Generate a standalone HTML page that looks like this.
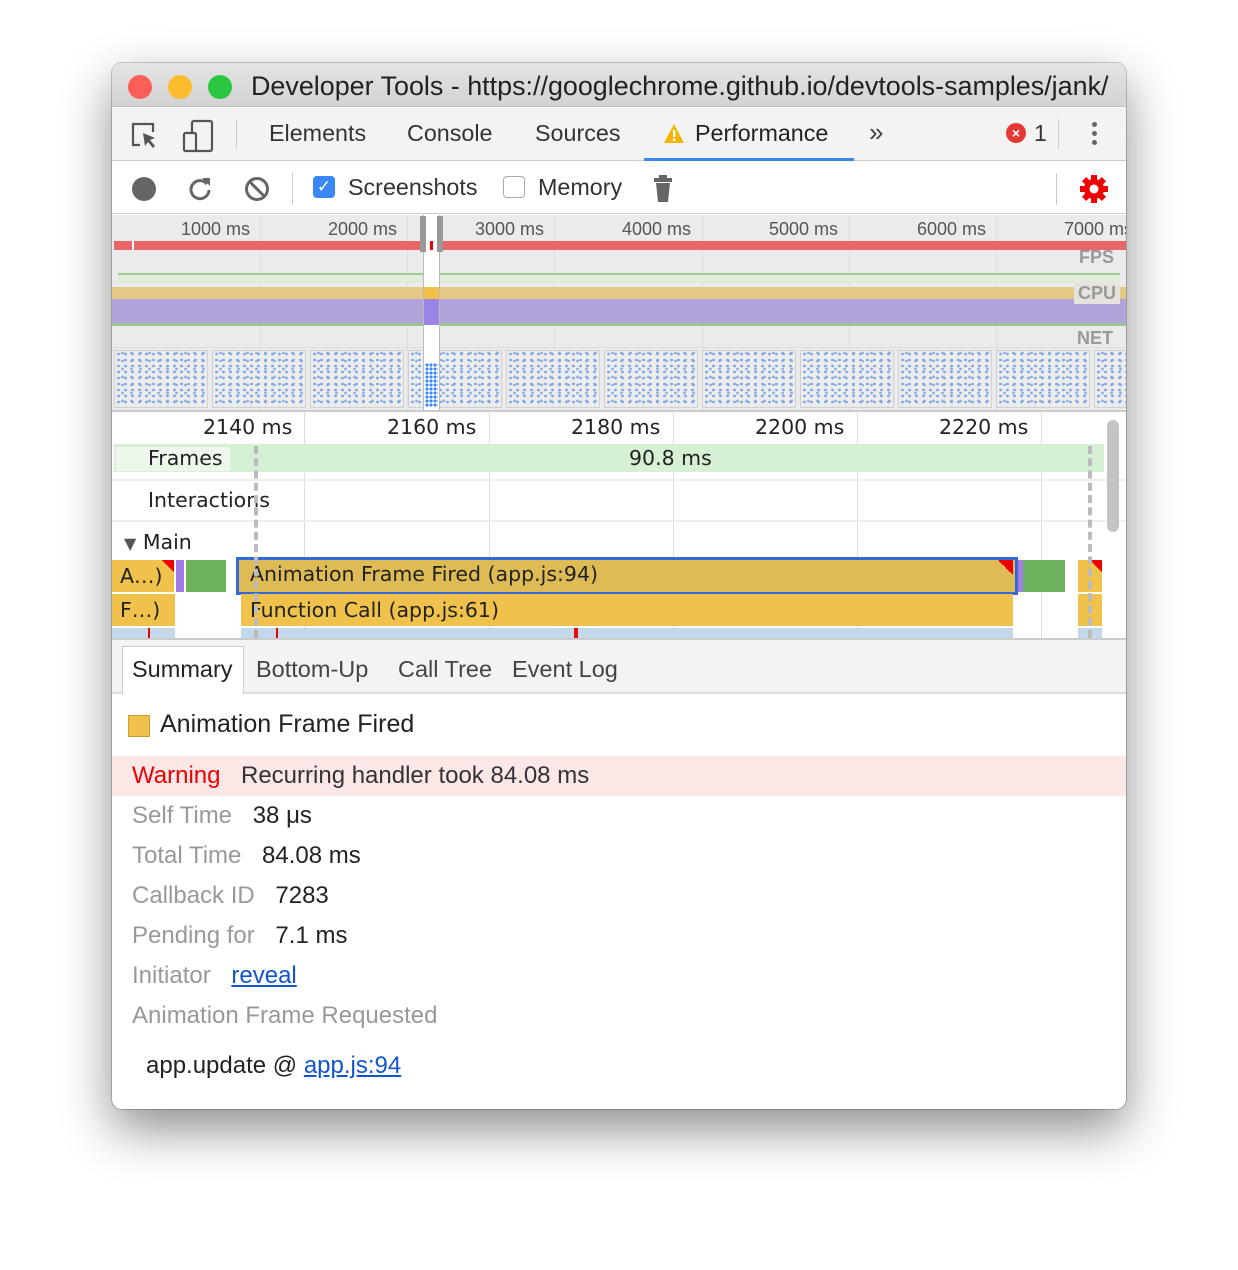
<!DOCTYPE html>
<html><head><meta charset="utf-8"><style>
*{margin:0;padding:0;box-sizing:border-box}
body{width:1238px;height:1270px;background:#fff;position:relative;overflow:hidden;font-family:"Liberation Sans",sans-serif}
.a{position:absolute}
#win{position:absolute;left:112px;top:63px;width:1014px;height:1046px;border-radius:10px;overflow:hidden;background:#fff;box-shadow:0 20px 50px rgba(0,0,0,.45),0 0 0 1px rgba(0,0,0,.2)}
.t{position:absolute;white-space:nowrap}
.dj{font-family:"DejaVu Sans",sans-serif}
.vl{position:absolute;width:1px;background:#ddd}
.shot{position:absolute;top:287px;height:58px;width:94px;background-color:#ececec;border:1px solid #d0d0d0;
background-image:radial-gradient(#7fa6e6 1.3px,transparent 1.7px),radial-gradient(#8fb0e8 1.3px,transparent 1.7px);
background-size:7px 6px,9px 8px;background-position:0 18px,3px 22px}
.s{font-size:24px}
</style></head><body>
<div id="win">
 <div class="a" style="left:0;top:0;width:1014px;height:44px;background:linear-gradient(#e4e4e4,#d3d3d3);border-bottom:1px solid #c0c0c0"></div>
 <div class="a" style="left:16px;top:12px;width:24px;height:24px;border-radius:50%;background:#fc5f57"></div>
 <div class="a" style="left:56px;top:12px;width:24px;height:24px;border-radius:50%;background:#fdbc2e"></div>
 <div class="a" style="left:96px;top:12px;width:24px;height:24px;border-radius:50%;background:#29c840"></div>
 <div class="t" style="left:139px;top:8px;font-size:26.9px;color:#222">Developer Tools - https://googlechrome.github.io/devtools-samples/jank/</div>
 <div class="a" style="left:0;top:45px;width:1014px;height:53px;background:#f3f3f3;border-bottom:1px solid #ccc"></div>
 <svg class="a" style="left:18px;top:58px" width="30" height="30" viewBox="0 0 30 30"><path d="M10 24H3V3h20v8" fill="none" stroke="#555" stroke-width="2.2"/><path d="M13 12l12 5-5 2 5 6-2 2-5-6-3 4z" fill="#555"/></svg>
 <svg class="a" style="left:70px;top:56px" width="34" height="34" viewBox="0 0 34 34"><rect x="10" y="2" width="20" height="30" rx="2" fill="none" stroke="#555" stroke-width="2.2"/><rect x="2" y="14" width="12" height="18" rx="1.5" fill="#f3f3f3" stroke="#555" stroke-width="2.2"/></svg>
 <div class="a" style="left:124px;top:56px;width:1px;height:30px;background:#ccc"></div>
 <div class="t" style="left:157px;top:57px;font-size:23.3px;color:#333">Elements</div>
 <div class="t" style="left:295px;top:57px;font-size:23.3px;color:#333">Console</div>
 <div class="t" style="left:423px;top:57px;font-size:23.3px;color:#333">Sources</div>
 <svg class="a" style="left:551px;top:60px" width="22" height="22" viewBox="0 0 22 22"><path d="M11 1L21 20H1z" fill="#f4b400"/><rect x="10" y="7" width="2.4" height="7" fill="#fff"/><rect x="10" y="15.5" width="2.4" height="2.4" fill="#fff"/></svg>
 <div class="t" style="left:583px;top:57px;font-size:23.3px;color:#222">Performance</div>
 <div class="a" style="left:532px;top:95px;width:210px;height:3px;background:#3d84f1"></div>
 <div class="t" style="left:757px;top:54px;font-size:26px;color:#444">»</div>
 <div class="a" style="left:894px;top:60px;width:20px;height:20px;border-radius:50%;background:#e53935;color:#fff;font-size:14px;text-align:center;line-height:20px;font-weight:bold">×</div>
 <div class="t" style="left:922px;top:57px;font-size:23px;color:#333">1</div>
 <div class="a" style="left:946px;top:56px;width:1px;height:30px;background:#ccc"></div>
 <div class="a" style="left:980px;top:59px;width:5px;height:5px;border-radius:50%;background:#666;box-shadow:0 9px 0 #666,0 18px 0 #666"></div>
 <div class="a" style="left:0;top:99px;width:1014px;height:52px;background:#fff;border-bottom:1px solid #ccc"></div>
 <div class="a" style="left:20px;top:114px;width:24px;height:24px;border-radius:50%;background:#666"></div>
 <svg class="a" style="left:74px;top:112px" width="28" height="28" viewBox="0 0 28 28"><path d="M21 9A9 9 0 1 0 23 15" fill="none" stroke="#666" stroke-width="3"/><path d="M16 3h8v8z" fill="#666"/></svg>
 <svg class="a" style="left:131px;top:112px" width="28" height="28" viewBox="0 0 28 28"><circle cx="14" cy="14" r="10.5" fill="none" stroke="#666" stroke-width="3"/><path d="M7 7l14 14" stroke="#666" stroke-width="3"/></svg>
 <div class="a" style="left:180px;top:110px;width:1px;height:32px;background:#ccc"></div>
 <div class="a" style="left:201px;top:113px;width:22px;height:22px;border-radius:4px;background:#3b87f5;color:#fff;font-size:17px;text-align:center;line-height:22px">✓</div>
 <div class="t" style="left:236px;top:111px;font-size:23.3px;color:#333">Screenshots</div>
 <div class="a" style="left:391px;top:113px;width:22px;height:22px;border-radius:4px;border:1px solid #aaa;background:#fff"></div>
 <div class="t" style="left:426px;top:111px;font-size:23.3px;color:#333">Memory</div>
 <svg class="a" style="left:540px;top:112px" width="22" height="28" viewBox="0 0 22 28"><rect x="7" y="0" width="8" height="3" fill="#666"/><rect x="2" y="3" width="18" height="4" fill="#666"/><path d="M4 8h14l-2 19H6z" fill="#666"/></svg>
 <div class="a" style="left:944px;top:110px;width:1px;height:32px;background:#ccc"></div>
 <svg class="a" style="left:966px;top:110px" width="32" height="32" viewBox="0 0 32 32"><g fill="#e00"><circle cx="16" cy="16" r="10"/><rect x="13" y="2" width="6" height="28"/><rect x="2" y="13" width="28" height="6"/><rect x="13" y="2" width="6" height="28" transform="rotate(45 16 16)"/><rect x="13" y="2" width="6" height="28" transform="rotate(-45 16 16)"/></g><circle cx="16" cy="16" r="4.5" fill="#fff"/></svg>
 <!-- overview -->
 <div class="a" style="left:0;top:152px;width:1014px;height:195px;background:#ebebeb"></div>
 <div class="vl" style="left:148px;top:152px;height:195px"></div>
 <div class="vl" style="left:295px;top:152px;height:195px"></div>
 <div class="vl" style="left:442px;top:152px;height:195px"></div>
 <div class="vl" style="left:590px;top:152px;height:195px"></div>
 <div class="vl" style="left:737px;top:152px;height:195px"></div>
 <div class="vl" style="left:884px;top:152px;height:195px"></div>
 <div class="t" style="left:69px;top:156px;font-size:18px;color:#555">1000 ms</div>
 <div class="t" style="left:216px;top:156px;font-size:18px;color:#555">2000 ms</div>
 <div class="t" style="left:363px;top:156px;font-size:18px;color:#555">3000 ms</div>
 <div class="t" style="left:510px;top:156px;font-size:18px;color:#555">4000 ms</div>
 <div class="t" style="left:657px;top:156px;font-size:18px;color:#555">5000 ms</div>
 <div class="t" style="left:805px;top:156px;font-size:18px;color:#555">6000 ms</div>
 <div class="t" style="left:952px;top:156px;font-size:18px;color:#555">7000 ms</div>
 <div class="a" style="left:2px;top:178px;width:1012px;height:9px;background:#e96666"></div>
 <div class="a" style="left:20px;top:178px;width:2px;height:9px;background:#fff"></div>
 <div class="t" style="left:967px;top:184px;font-size:18px;font-weight:bold;color:#999">FPS</div>
 <div class="a" style="left:6px;top:210px;width:1002px;height:10px;border-top:2px solid #9ccc8f;background:#e0ecd9"></div>
 <div class="a" style="left:0;top:224px;width:1014px;height:38px;background:#e4c883"></div>
 <div class="a" style="left:0;top:236px;width:1014px;height:26px;background:#b3a3db"></div>
 <div class="a" style="left:0;top:260px;width:1014px;height:3px;background:#9bc490"></div>
 <div class="t" style="left:962px;top:220px;font-size:18px;font-weight:bold;color:#999;background:#e6e2dc;padding:0 4px">CPU</div>
 <div class="t" style="left:965px;top:265px;font-size:18px;font-weight:bold;color:#999">NET</div>
 <div class="a" style="left:0;top:284px;width:1014px;height:1px;background:#ddd"></div>
 <div class="shot" style="left:2px"></div><div class="shot" style="left:100px"></div><div class="shot" style="left:198px"></div><div class="shot" style="left:296px"></div><div class="shot" style="left:394px"></div><div class="shot" style="left:492px"></div><div class="shot" style="left:590px"></div><div class="shot" style="left:688px"></div><div class="shot" style="left:786px"></div><div class="shot" style="left:884px"></div><div class="shot" style="left:982px"></div>
 <div class="a" style="left:311px;top:152px;width:17px;height:195px;background:#fff;border-left:1px solid #bbb;border-right:1px solid #bbb"></div>
 <div class="a" style="left:312px;top:224px;width:15px;height:38px;background:#9a84e8"></div>
 <div class="a" style="left:312px;top:224px;width:15px;height:12px;background:#f2c046"></div>
 <div class="a" style="left:313px;top:300px;width:13px;height:44px;background-image:radial-gradient(#3b87f5 1.4px,transparent 1.8px);background-size:4px 4px"></div>
 <div class="a" style="left:308px;top:153px;width:6px;height:36px;background:#999"></div>
 <div class="a" style="left:325px;top:153px;width:6px;height:36px;background:#999"></div>
 <div class="a" style="left:318px;top:178px;width:3px;height:9px;background:#e00"></div>
 <!-- flame chart -->
 <div class="a" style="left:0;top:347px;width:1014px;height:228px;background:#fff;border-top:2px solid #ccc"></div>
 <div class="vl" style="left:192px;top:349px;height:226px"></div>
 <div class="vl" style="left:377px;top:349px;height:226px"></div>
 <div class="vl" style="left:561px;top:349px;height:226px"></div>
 <div class="vl" style="left:745px;top:349px;height:226px"></div>
 <div class="vl" style="left:929px;top:349px;height:226px"></div>
 <div class="t dj" style="left:91px;top:352px;font-size:20.5px;color:#222">2140 ms</div>
 <div class="t dj" style="left:275px;top:352px;font-size:20.5px;color:#222">2160 ms</div>
 <div class="t dj" style="left:459px;top:352px;font-size:20.5px;color:#222">2180 ms</div>
 <div class="t dj" style="left:643px;top:352px;font-size:20.5px;color:#222">2200 ms</div>
 <div class="t dj" style="left:827px;top:352px;font-size:20.5px;color:#222">2220 ms</div>
 <div class="a" style="left:2px;top:381px;width:990px;height:28px;background:#d6f0d3"></div>
 <div class="a" style="left:4px;top:384px;width:114px;height:24px;background:#eef7ec"></div>
 <div class="t dj" style="left:36px;top:383px;font-size:20.5px;color:#222">Frames</div>
 <div class="t dj" style="left:517px;top:383px;font-size:20.5px;color:#222">90.8 ms</div>
 <div class="a" style="left:0;top:416px;width:1014px;height:2px;background:#eee"></div>
 <div class="t dj" style="left:36px;top:425px;font-size:20.5px;color:#222">Interactions</div>
 <div class="a" style="left:0;top:457px;width:1014px;height:2px;background:#eee"></div>
 <div class="t dj" style="left:12px;top:467px;font-size:20.5px;color:#222"><span style="font-size:16px;color:#555">▼</span> Main</div>
 <div class="a dj" style="left:0;top:497px;width:62px;height:32px;background:#f0c24b;font-size:20.5px;line-height:32px;padding-left:8px;color:#222">A…)</div>
 <div class="a" style="left:50px;top:497px;width:12px;height:12px;background:linear-gradient(45deg,transparent 50%,#e00 50%)"></div>
 <div class="a" style="left:64px;top:497px;width:8px;height:32px;background:#a17ce8"></div>
 <div class="a" style="left:74px;top:497px;width:40px;height:32px;background:#6db35f"></div>
 <div class="a" style="left:124px;top:494px;width:782px;height:38px;border:3px solid #3369d6;background:#dfbb55"></div>
 <div class="t dj" style="left:138px;top:499px;font-size:20.5px;color:#222">Animation Frame Fired (app.js:94)</div>
 <div class="a" style="left:886px;top:497px;width:15px;height:15px;background:linear-gradient(45deg,transparent 50%,#e00 50%)"></div>
 <div class="a" style="left:906px;top:497px;width:5px;height:32px;background:#a17ce8"></div>
 <div class="a" style="left:911px;top:497px;width:42px;height:32px;background:#6db35f"></div>
 <div class="a" style="left:966px;top:497px;width:24px;height:32px;background:#f0c24b"></div>
 <div class="a" style="left:978px;top:497px;width:12px;height:12px;background:linear-gradient(45deg,transparent 50%,#e00 50%)"></div>
 <div class="a dj" style="left:0;top:531px;width:63px;height:32px;background:#f0c24b;font-size:20.5px;line-height:32px;padding-left:8px;color:#222">F…)</div>
 <div class="a dj" style="left:129px;top:531px;width:772px;height:32px;background:#f0c24b;font-size:20.5px;line-height:32px;padding-left:9px;color:#222">Function Call (app.js:61)</div>
 <div class="a" style="left:966px;top:531px;width:24px;height:32px;background:#f0c24b"></div>
 <div class="a" style="left:0;top:565px;width:63px;height:10px;background:#c4d8ec"></div>
 <div class="a" style="left:129px;top:565px;width:772px;height:10px;background:#c4d8ec"></div>
 <div class="a" style="left:966px;top:565px;width:24px;height:10px;background:#c4d8ec"></div>
 <div class="a" style="left:36px;top:565px;width:2px;height:10px;background:#e00"></div>
 <div class="a" style="left:164px;top:565px;width:2px;height:10px;background:#e00"></div>
 <div class="a" style="left:462px;top:565px;width:4px;height:10px;background:#e00"></div>
 <div class="a" style="left:142px;top:383px;width:0;height:192px;border-left:4px dashed #bbb"></div>
 <div class="a" style="left:976px;top:383px;width:0;height:192px;border-left:4px dashed #bbb"></div>
 <div class="a" style="left:995px;top:357px;width:12px;height:112px;border-radius:6px;background:#c4c4c4"></div>
 <!-- bottom tabs -->
 <div class="a" style="left:0;top:575px;width:1014px;height:56px;background:#f3f3f3;border-top:2px solid #ccc;border-bottom:2px solid #ddd"></div>
 <div class="a" style="left:10px;top:583px;width:122px;height:48px;background:#fff;border:1px solid #ccc;border-bottom:none"></div>
 <div class="t" style="left:20px;top:593px;font-size:23.5px;color:#222">Summary</div>
 <div class="t" style="left:144px;top:593px;font-size:23.5px;color:#444">Bottom-Up</div>
 <div class="t" style="left:286px;top:593px;font-size:23.5px;color:#444">Call Tree</div>
 <div class="t" style="left:400px;top:593px;font-size:23.5px;color:#444">Event Log</div>
 <!-- summary -->
 <div class="a" style="left:16px;top:652px;width:22px;height:22px;background:#f0c24b;border:1px solid #c9a032"></div>
 <div class="t" style="left:48px;top:647px;font-size:25px;color:#222">Animation Frame Fired</div>
 <div class="a" style="left:0;top:693px;width:1014px;height:40px;background:#fce7e7"></div>
 <div class="t s" style="left:20px;top:699px;color:#e00">Warning</div>
 <div class="t s" style="left:129px;top:699px;color:#333">Recurring handler took 84.08 ms</div>
 <div class="t s" style="left:20px;top:739px;color:#999">Self Time <span style="color:#222;margin-left:14px">38 μs</span></div>
 <div class="t s" style="left:20px;top:779px;color:#999">Total Time <span style="color:#222;margin-left:14px">84.08 ms</span></div>
 <div class="t s" style="left:20px;top:819px;color:#999">Callback ID <span style="color:#222;margin-left:14px">7283</span></div>
 <div class="t s" style="left:20px;top:859px;color:#999">Pending for <span style="color:#222;margin-left:14px">7.1 ms</span></div>
 <div class="t s" style="left:20px;top:899px;color:#999">Initiator <span style="color:#1155cc;margin-left:14px;text-decoration:underline">reveal</span></div>
 <div class="t s" style="left:20px;top:939px;color:#999">Animation Frame Requested</div>
 <div class="t s" style="left:34px;top:989px;color:#222">app.update @ <span style="color:#1155cc;text-decoration:underline">app.js:94</span></div>
</div>
</body></html>
